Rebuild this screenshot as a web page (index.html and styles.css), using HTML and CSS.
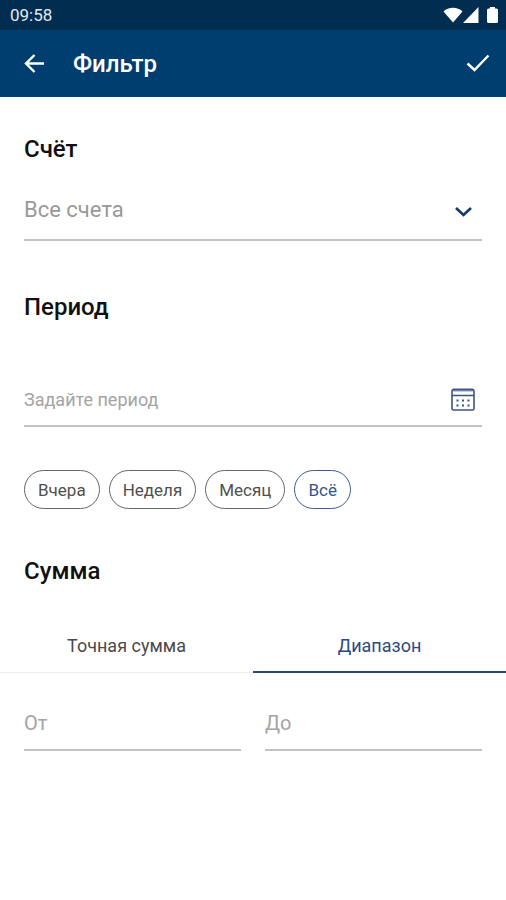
FILE: index.html
```html
<!DOCTYPE html>
<html lang="ru">
<head>
<meta charset="utf-8">
<meta name="viewport" content="width=device-width, initial-scale=1">
<title>Фильтр</title>
<link rel="stylesheet" href="styles.css">
</head>
<body>
<div class="status">
  <span>09:58</span>
  <div class="status-icons">
    <svg width="20" height="16" viewBox="0 0 20 16" aria-hidden="true"><path d="M0.500 4.500C5.500-.5 14.500-.5 19.500 4.500L10 15.500Z"/></svg>
    <svg width="16" height="16" viewBox="0 0 16 16" aria-hidden="true"><path d="M15.500 0V16H0Z"/></svg>
    <svg class="battery" width="11" height="16" viewBox="0 0 11 16" aria-hidden="true"><path d="M3 0H8V1.500H9.500Q11 1.500 11 3V14.500Q11 16 9.500 16H1.500Q0 16 0 14.500V3Q0 1.500 1.500 1.500H3Z"/></svg>
  </div>
</div>
<header class="bar">
  <button class="icon-button" type="button" aria-label="Назад">
    <svg width="22" height="22" viewBox="0 0 22 22" aria-hidden="true"><path d="M20 10.500H2.500M10.500 2L2 10.500L10.500 19"/></svg>
  </button>
  <h1>Фильтр</h1>
  <button class="icon-button" type="button" aria-label="Применить">
    <svg width="24" height="20" viewBox="0 0 24 20" aria-hidden="true"><path d="M1.500 9.500L8.500 16L22.500 1.500"/></svg>
  </button>
</header>
<main>
  <section class="group">
    <h2><label for="account">Счёт</label></h2>
    <div class="field account">
      <select id="account"><option>Все счета</option></select>
      <svg class="chevron" width="24" height="16" viewBox="0 0 24 16" aria-hidden="true"><path d="M5 7L12.500 14L20 7"/></svg>
    </div>
  </section>
  <section class="group period-group">
    <h2><label for="period">Период</label></h2>
    <div class="field period">
      <input id="period" type="text" placeholder="Задайте период">
      <button class="icon-button" type="button" aria-label="Открыть календарь">
        <svg class="calendar" width="24" height="24" viewBox="0 0 24 24" aria-hidden="true">
          <path class="calendar-top" d="M2 3H22"/>
          <path d="M1 4Q1 2.500 2.500 2.500H21.500Q23 2.500 23 4V21.500Q23 23 21.500 23H2.500Q1 23 1 21.500ZM1 8.500H23"/>
          <path class="dots" d="M5.500 13.500H7.500M11 13.500H13M16.500 13.500H18.500M5.500 18.500H7.500M11 18.500H13M16.500 18.500H18.500"/>
        </svg>
      </button>
    </div>
    <div class="chips">
      <button class="chip" type="button" aria-pressed="false">Вчера</button>
      <button class="chip" type="button" aria-pressed="false">Неделя</button>
      <button class="chip" type="button" aria-pressed="false">Месяц</button>
      <button class="chip" type="button" aria-pressed="true">Всё</button>
    </div>
  </section>
  <section class="sum-group">
    <h2>Сумма</h2>
    <div class="tabs" role="tablist" aria-label="Сумма">
      <button class="tab" type="button" role="tab" aria-selected="false">Точная сумма</button>
      <button class="tab" type="button" role="tab" aria-selected="true">Диапазон</button>
    </div>
    <div class="range">
      <div class="field amount"><input type="text" inputmode="decimal" aria-label="Сумма от" placeholder="От"></div>
      <div class="field amount"><input type="text" inputmode="decimal" aria-label="Сумма до" placeholder="До"></div>
    </div>
  </section>
</main>
</body>
</html>
```
FILE: styles.css
```css
* { box-sizing: border-box; }

body {
  margin: 0;
  background: #fff;
  color: #111;
  font-family: Roboto, "Liberation Sans", sans-serif;
}

button, input, select {
  border: 0;
  padding: 0;
  background: none;
  color: inherit;
  font: inherit;
}

.status {
  display: flex;
  align-items: center;
  justify-content: space-between;
  height: 30px;
  padding: 0 8px 0 10px;
  background: #002d50;
  color: #e4e9f0;
  font-size: 17px;
}

.status-icons { display: flex; }

.status-icons svg { fill: #fff; }

.status-icons .battery { margin-left: 8px; }

.bar {
  display: flex;
  align-items: center;
  height: 67px;
  padding: 0 16px 0 24px;
  background: #003e70;
  color: #fff;
}

.bar h1 {
  flex: 1;
  margin: 0 0 0 27px;
  font-size: 24px;
  font-weight: 500;
  line-height: 28px;
}

.icon-button {
  display: flex;
  flex: none;
}

.bar svg {
  fill: none;
  stroke: #fff;
  stroke-width: 2.4;
}

main { padding-top: 38px; }

h2 {
  margin: 0;
  font-size: 24px;
  font-weight: 500;
  line-height: 28px;
}

.group { padding: 0 24px; }

.period-group { margin-top: 52px; }

.sum-group { margin-top: 48px; }

.sum-group h2 { padding: 0 24px; }

.field {
  display: flex;
  align-items: center;
  border-bottom: 2px solid #c2c2c2;
}

.field input, .field select {
  flex: 1;
  min-width: 0;
  height: 100%;
  color: #999;
}

.field input::placeholder {
  color: #a4a4a4;
  opacity: 1;
}

.account {
  position: relative;
  height: 62px;
  margin-top: 16px;
  font-size: 22px;
}

.account select { appearance: none; }

.chevron {
  position: absolute;
  right: 7px;
  pointer-events: none;
  fill: none;
  stroke: #16386c;
  stroke-width: 2.6;
}

.period {
  height: 54px;
  margin-top: 52px;
  padding-right: 7px;
  font-size: 18px;
}

.calendar {
  fill: none;
  stroke: #3a5488;
  stroke-width: 1.6;
}

.calendar .calendar-top {
  stroke: #8b98b3;
  stroke-width: 3;
}

.calendar .dots { stroke-width: 2; }

.chips {
  display: flex;
  flex-wrap: wrap;
  gap: 9px;
  margin-top: 43px;
}

.chip {
  height: 39px;
  padding: 0 13px;
  border: 1px solid #666;
  border-radius: 20px;
  color: #505050;
  font-size: 17px;
}

.chip[aria-pressed="true"] {
  border-color: #3d5c93;
  color: #34558d;
}

.tabs {
  display: grid;
  grid-template-columns: repeat(2, minmax(0, 1fr));
  margin-top: 32px;
}

.tab {
  height: 56px;
  color: #4a4a4a;
  font-size: 18px;
  box-shadow: inset 0 -1px #eee;
}

.tab[aria-selected="true"] {
  color: #2c4a80;
  box-shadow: inset 0 -2px #27477d;
}

.range {
  display: grid;
  grid-template-columns: repeat(2, minmax(0, 1fr));
  gap: 24px;
  margin-top: 24px;
  padding: 0 24px;
}

.amount {
  height: 54px;
  font-size: 20px;
}
```
